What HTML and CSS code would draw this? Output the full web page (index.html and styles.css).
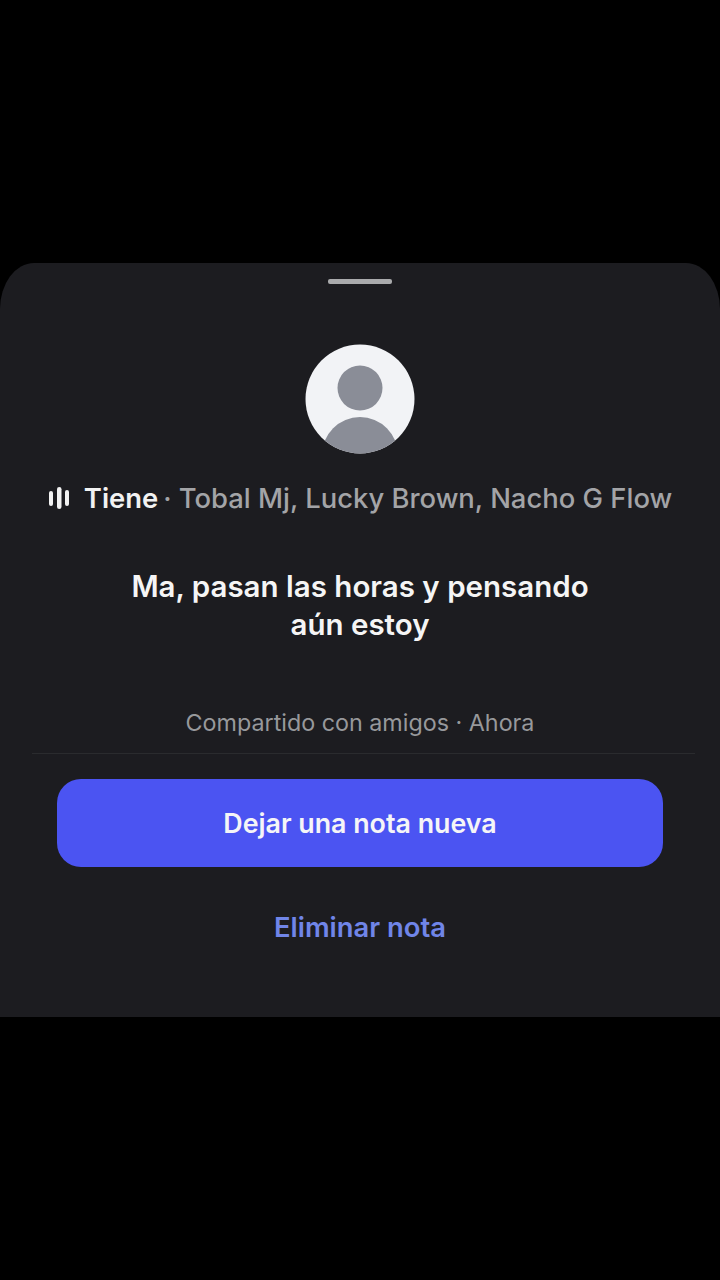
FILE: index.html
```html
<!DOCTYPE html>
<html lang="en">
<head>
    <meta charset="UTF-8">
    <meta name="viewport" content="width=device-width, initial-scale=1.0">
    <title>Nota</title>
    <link rel="stylesheet" href="styles.css">
</head>
<body>
    <section class="sheet">
        <div class="handle"></div>
        <svg class="avatar" viewBox="0 0 110 110" width="110" height="110">
            <defs>
                <clipPath id="avatar-clip"><circle cx="55" cy="55" r="54.5"></circle></clipPath>
            </defs>
            <circle cx="55" cy="55" r="54.5" fill="#f2f3f6"></circle>
            <circle cx="55" cy="44" r="22.5" fill="#8a8d97"></circle>
            <circle cx="55" cy="111" r="38" fill="#8a8d97" clip-path="url(#avatar-clip)"></circle>
        </svg>
        <div class="track">
            <svg class="track-icon" viewBox="0 0 22 22" width="22" height="22">
                <rect x="1" y="4" width="4" height="15" rx="2"></rect>
                <rect x="9" y="0" width="4.5" height="22" rx="2.25"></rect>
                <rect x="17" y="3" width="4" height="16" rx="2"></rect>
            </svg>
            <span class="track-title">Tiene</span>
            <span class="track-artists">· Tobal Mj, Lucky Brown, Nacho G Flow</span>
        </div>
        <p class="note">Ma, pasan las horas y pensando<br>aún estoy</p>
        <p class="meta">Compartido con amigos · Ahora</p>
        <div class="divider"></div>
        <button class="btn-new">Dejar una nota nueva</button>
        <button class="btn-delete">Eliminar nota</button>
    </section>
</body>
</html>
```

FILE: styles.css
```css
body {
    margin: 0;
    padding: 263px 0 0;
    height: 1280px;
    box-sizing: border-box;
    background-color: #000;
    font-family: Inter, "Noto Sans", sans-serif;
    overflow: hidden;
}
.sheet {
    height: 754px;
    box-sizing: border-box;
    padding-top: 16px;
    background-color: #1c1c20;
    border-radius: 34px 34px 0 0 / 46px 46px 0 0;
    display: flex;
    flex-direction: column;
    align-items: center;
}
.handle {
    width: 64px;
    height: 5px;
    border-radius: 2px;
    background-color: #a9aaac;
}
.avatar {
    margin-top: 60px;
    display: block;
}
.track {
    margin-top: 28px;
    height: 32px;
    display: flex;
    align-items: center;
    font-size: 27.4px;
    font-weight: 500;
    white-space: nowrap;
}
.track-icon {
    fill: #f2f2f2;
    margin-right: 14px;
}
.track-title {
    color: #f2f2f2;
    font-weight: 600;
    margin-right: 5px;
}
.track-artists {
    color: #a3a4a7;
}
.note {
    margin: 53px 0 0;
    font-size: 29.5px;
    font-weight: 600;
    line-height: 38px;
    color: #f5f5f5;
    text-align: center;
}
.meta {
    margin: 65px 0 0;
    font-size: 23.3px;
    line-height: 30px;
    color: #97989b;
}
.divider {
    width: 663px;
    height: 1px;
    margin: 15px 0 0 7px;
    background-color: #2a2b2e;
}
.btn-new {
    width: 606px;
    height: 88px;
    margin-top: 25px;
    border: 0;
    border-radius: 24px;
    background-color: #4b54f2;
    color: #f5f5f7;
    font-family: inherit;
    font-size: 26.8px;
    font-weight: 600;
}
.btn-delete {
    margin-top: 40px;
    padding: 0;
    border: 0;
    background: none;
    color: #7085e8;
    font-family: inherit;
    font-size: 27.4px;
    line-height: 40px;
    font-weight: 600;
}
```
